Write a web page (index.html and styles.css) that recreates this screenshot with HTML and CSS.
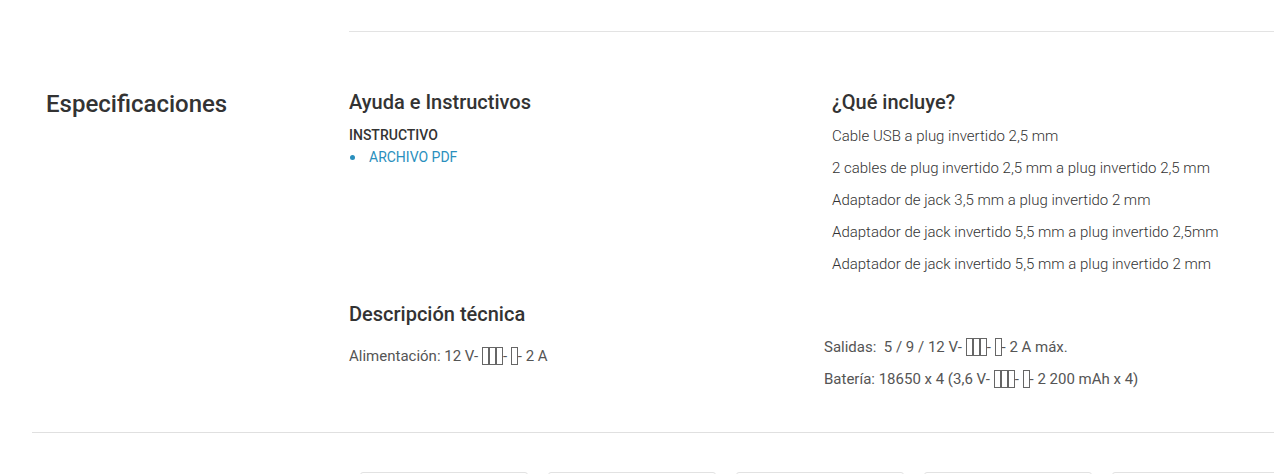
FILE: index.html
```html
<!DOCTYPE html>
<html lang="es">
<head>
<meta charset="utf-8">
<link rel="stylesheet" href="styles.css">
</head>
<body>
<div class="top-rule"></div>
<section class="specs">
  <h2 class="specs-title">Especificaciones</h2>
  <div class="specs-body">
    <div class="col col-left">
      <h3 class="col-title">Ayuda e Instructivos</h3>
      <div class="doc-label">INSTRUCTIVO</div>
      <ul class="doc-list">
        <li><a href="#" class="doc-link">ARCHIVO PDF</a></li>
      </ul>
    </div>
    <div class="col col-right">
      <h3 class="col-title">¿Qué incluye?</h3>
      <ul class="incl-list">
        <li>Cable USB a plug invertido 2,5 mm</li>
        <li>2 cables de plug invertido 2,5 mm a plug invertido 2,5 mm</li>
        <li>Adaptador de jack 3,5 mm a plug invertido 2 mm</li>
        <li>Adaptador de jack invertido 5,5 mm a plug invertido 2,5mm</li>
        <li>Adaptador de jack invertido 5,5 mm a plug invertido 2 mm</li>
      </ul>
    </div>
    <div class="col col-left tech">
      <h3 class="col-title">Descripción técnica</h3>
      <p class="tech-line">Alimentación: 12 V- <span class="tofu"></span><span class="tofu"></span><span class="tofu"></span>- <span class="tofu"></span>- 2 A</p>
    </div>
    <div class="col col-right tech-right">
      <p class="tech-line">Salidas:&nbsp; 5 / 9 / 12 V- <span class="tofu"></span><span class="tofu"></span><span class="tofu"></span>- <span class="tofu"></span>- 2 A máx.</p>
      <p class="tech-line">Batería: 18650 x 4 (3,6 V- <span class="tofu"></span><span class="tofu"></span><span class="tofu"></span>- <span class="tofu"></span>- 2 200 mAh x 4)</p>
    </div>
  </div>
</section>
<div class="cards">
  <div class="card"></div>
  <div class="card"></div>
  <div class="card"></div>
  <div class="card"></div>
  <div class="card"></div>
</div>
</body>
</html>
```

FILE: styles.css
```css
* { box-sizing: border-box; }
html, body { margin: 0; padding: 0; background: #fff; }
body {
  font-family: Roboto, "Liberation Sans", sans-serif;
  color: #333;
  width: 1274px;
  height: 474px;
  overflow: hidden;
}
.top-rule {
  margin: 31px 0 0 349px;
  border-top: 1px solid #e3e3e3;
}
.specs {
  margin-left: 32px;
  display: flex;
  padding-top: 58px;
  padding-bottom: 37px;
  border-bottom: 1px solid #e0e0e0;
}
.specs-title {
  width: 317px;
  flex: none;
  margin: 0;
  padding-left: 14px;
  font-size: 24px;
  font-weight: 500;
  line-height: 28px;
  color: #333;
}
.specs-body {
  flex: 1;
  display: grid;
  grid-template-columns: 483px 1fr;
}
.col-title {
  margin: 0;
  font-size: 20px;
  font-weight: 500;
  line-height: 24px;
  color: #333;
}
.doc-label {
  margin-top: 13px;
  font-size: 14px;
  font-weight: 500;
  line-height: 16px;
  color: #333;
}
.doc-list {
  list-style: none;
  margin: 6px 0 0;
  padding: 0;
}
.doc-list li {
  display: flex;
  align-items: center;
  gap: 14px;
  font-size: 14px;
  line-height: 16px;
}
.doc-list li::before {
  content: "";
  width: 5px;
  height: 5px;
  border-radius: 50%;
  background: #2a8fbd;
  margin-left: 1px;
}
.doc-link {
  color: #2a8fbd;
  text-decoration: none;
}
.incl-list {
  list-style: none;
  margin: 6px 0 0;
  padding: 0;
}
.incl-list li {
  font-size: 15px;
  font-weight: 300;
  line-height: 32px;
  color: #333;
}
.tech { padding-top: 22px; }
.tech-right { padding-top: 51px; margin-left: -8px; }
.tech .tech-line { margin-top: 14px; }
.tech-line {
  margin: 0;
  font-size: 15px;
  line-height: 32px;
  color: #555;
  white-space: nowrap;
}
.tofu {
  display: inline-block;
  width: 7px;
  height: 18px;
  border: 1px solid #666;
  vertical-align: -4px;
}
.cards {
  display: flex;
  gap: 20px;
  margin: 39px 0 0 360px;
}
.card {
  flex: none;
  width: 168px;
  height: 40px;
  border: 1px solid #e2e2e2;
  border-radius: 3px;
}
```
